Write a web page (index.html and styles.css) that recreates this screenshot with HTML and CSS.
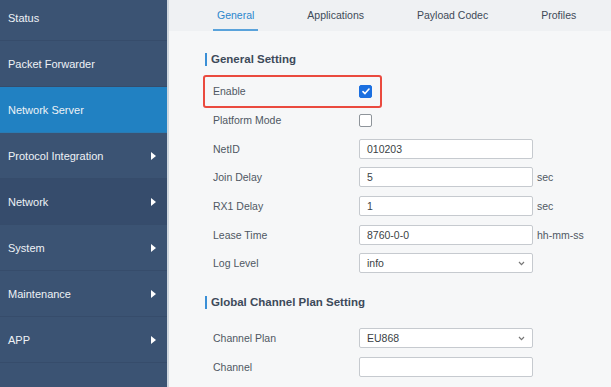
FILE: index.html
```html
<!DOCTYPE html>
<html lang="en">
<head>
  <meta charset="UTF-8" />
  <title>Network Server | General</title>
  <link rel="stylesheet" href="styles.css">
</head>
<body>
  <div class="menu">
    <div class="menu-item first">Status</div>
    <div class="menu-item">Packet Forwarder</div>
    <div class="menu-item ativo">Network Server</div>
    <div class="menu-item">Protocol Integration <span class="seta"></span></div>
    <div class="menu-item escuro">Network <span class="seta"></span></div>
    <div class="menu-item">System <span class="seta"></span></div>
    <div class="menu-item">Maintenance <span class="seta"></span></div>
    <div class="menu-item">APP <span class="seta"></span></div>
  </div>

  <div class="principal">
    <div class="abas">
      <div class="aba ativa">General</div>
      <div class="aba">Applications</div>
      <div class="aba">Payload Codec</div>
      <div class="aba">Profiles</div>
    </div>

    <div class="conteudo">
      <div class="titulo">General Setting</div>

      <div class="linha destaque">
        <label>Enable</label>
        <span class="check marcado">
          <svg width="8" height="7" viewBox="0 0 8 7"><path d="M1 3.6 L3 5.6 L7 1" fill="none" stroke="#fff" stroke-width="1.6" stroke-linecap="round" stroke-linejoin="round"/></svg>
        </span>
      </div>
      <div class="linha">
        <label>Platform Mode</label>
        <span class="check"></span>
      </div>
      <div class="linha">
        <label>NetID</label>
        <div class="campo">010203</div>
      </div>
      <div class="linha">
        <label>Join Delay</label>
        <div class="campo">5</div>
        <span class="unidade">sec</span>
      </div>
      <div class="linha">
        <label>RX1 Delay</label>
        <div class="campo">1</div>
        <span class="unidade">sec</span>
      </div>
      <div class="linha">
        <label>Lease Time</label>
        <div class="campo">8760-0-0</div>
        <span class="unidade">hh-mm-ss</span>
      </div>
      <div class="linha">
        <label>Log Level</label>
        <div class="campo selecao">info
          <svg width="7" height="5" viewBox="0 0 7 5"><path d="M1 1 L3.5 3.6 L6 1" fill="none" stroke="#777" stroke-width="1.2"/></svg>
        </div>
      </div>

      <div class="titulo segundo">Global Channel Plan Setting</div>

      <div class="linha">
        <label>Channel Plan</label>
        <div class="campo selecao">EU868
          <svg width="7" height="5" viewBox="0 0 7 5"><path d="M1 1 L3.5 3.6 L6 1" fill="none" stroke="#777" stroke-width="1.2"/></svg>
        </div>
      </div>
      <div class="linha">
        <label>Channel</label>
        <div class="campo"></div>
      </div>
    </div>
  </div>
</body>
</html>
```

FILE: styles.css
```css
body {
  margin: 0;
  padding: 0;
  font-family: "Liberation Sans", Arial, sans-serif;
  display: flex;
  height: 387px;
  overflow: hidden;
  background-color: #f6f7f8;
}

/* menu lateral */
.menu {
  width: 167px;
  flex-shrink: 0;
  background-color: #3b5373;
  border-right: 2px solid #cfd7df;
  margin-top: -5px;
}

.menu-item {
  height: 45px;
  border-bottom: 1px solid #364c6b;
  display: flex;
  align-items: center;
  justify-content: space-between;
  padding: 0 11px 0 8px;
  color: #eef2f6;
  font-size: 11px;
}

.menu-item.ativo {
  background-color: #2181c2;
  border-bottom-color: #2a7bb3;
}

.menu-item.escuro {
  background-color: #364c6c;
}

.seta {
  width: 0;
  height: 0;
  border-top: 4px solid transparent;
  border-bottom: 4px solid transparent;
  border-left: 5px solid #ffffff;
}

/* area principal */
.principal {
  flex: 1;
  display: flex;
  flex-direction: column;
}

.abas {
  height: 31px;
  background-color: #eff1f3;
  display: flex;
  gap: 45px;
  padding-left: 44px;
}

.aba {
  padding: 0 4px;
  font-size: 10.5px;
  color: #3e4a58;
  display: flex;
  align-items: center;
  border-bottom: 2px solid transparent;
  box-sizing: border-box;
}

.aba.ativa {
  color: #2b86cc;
  border-bottom-color: #5aa3db;
}

.conteudo {
  padding: 22px 0 0 36px;
}

.titulo {
  font-size: 11.5px;
  font-weight: bold;
  color: #3d4a5a;
  border-left: 2px solid #3a8fd6;
  padding-left: 4px;
  line-height: 13px;
  margin-bottom: 11px;
}

.titulo.segundo {
  margin-top: 18px;
  margin-bottom: 15px;
}

.linha {
  height: 28.7px;
  display: flex;
  align-items: center;
  padding-left: 8px;
  position: relative;
}

.linha label {
  width: 146px;
  font-size: 10.5px;
  color: #4f5863;
}

.destaque::after {
  content: "";
  position: absolute;
  left: -2px;
  top: -2px;
  width: 175px;
  height: 29px;
  border: 2px solid #ea4a3f;
  border-radius: 3px;
}

.check {
  width: 11px;
  height: 11px;
  border: 1px solid #8e949a;
  border-radius: 2px;
  background-color: #fff;
  display: flex;
  align-items: center;
  justify-content: center;
}

.check.marcado {
  background-color: #1b6fe0;
  border-color: #1b6fe0;
}

.campo {
  width: 174px;
  height: 20px;
  box-sizing: border-box;
  background-color: #fff;
  border: 1px solid #c6cacf;
  border-radius: 2px;
  padding: 0 7px;
  font-size: 10.5px;
  color: #3a3f45;
  display: flex;
  align-items: center;
  justify-content: space-between;
}

.unidade {
  margin-left: 4px;
  font-size: 10.5px;
  color: #4f5863;
}
```
